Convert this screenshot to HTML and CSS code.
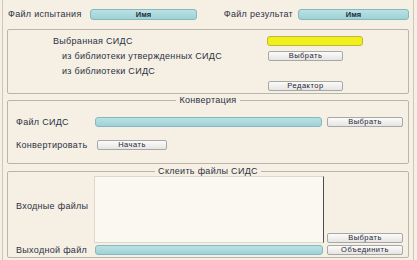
FILE: index.html
```html
<!DOCTYPE html>
<html lang="ru">
<head>
<meta charset="utf-8">
<link rel="stylesheet" href="styles.css">
</head>
<body>
<div class="page">
  <div class="top">
    <span class="lbl first">Файл испытания</span>
    <div class="field teal">Имя</div>
    <span class="lbl right">Файл результат</span>
    <div class="field teal">Имя</div>
  </div>

  <div class="box sel">
    <span class="lbl l1">Выбранная СИДС</span>
    <div class="field yellow"></div>
    <span class="lbl l2">из библиотеки утвержденных СИДС</span>
    <div class="btn">Выбрать</div>
    <span class="lbl l2">из библиотеки СИДС</span>
    <div></div>
    <div></div>
    <div class="btn">Редактор</div>
  </div>

  <fieldset class="group conv">
    <legend>Конвертация</legend>
    <div class="grid2">
      <span class="lbl">Файл СИДС</span>
      <div class="field teal"></div>
      <div class="btn">Выбрать</div>
      <span class="lbl">Конвертировать</span>
      <div class="btn start">Начать</div>
      <div></div>
    </div>
  </fieldset>

  <fieldset class="group merge">
    <legend>Склеить файлы СИДС</legend>
    <div class="grid3">
      <span class="lbl mid">Входные файлы</span>
      <div class="list"></div>
      <div class="btn pick">Выбрать</div>
      <span class="lbl">Выходной файл</span>
      <div class="field teal"></div>
      <div class="btn">Объединить</div>
    </div>
  </fieldset>
</div>
</body>
</html>
```

FILE: styles.css
```css
* { box-sizing: border-box; }
html, body { margin: 0; padding: 0; }
body {
  background: #f6efe3;
  font-family: "Liberation Sans", Arial, sans-serif;
  font-size: 9px;
  color: #2a3246;
  width: 417px;
  height: 260px;
  overflow: hidden;
}
.page {
  margin: 0 3px 0 2px;
  height: 260px;
  border-left: 1px solid #cdc7ba;
  border-right: 1px solid #cdc7ba;
  padding: 0 4px;
}
.lbl {
  letter-spacing: 0.3px;
  white-space: nowrap;
  line-height: 10px;
}
.top {
  display: grid;
  grid-template-columns: 83px 107px 1fr 111px;
  align-items: center;
  height: 29px;
  padding-bottom: 4px;
  padding-top: 3px;
}
.top .first { padding-left: 1px; }
.top .right { text-align: right; padding-right: 5px; }
.field {
  height: 10px;
  border-radius: 3px;
  font-size: 7.5px;
  font-weight: bold;
  line-height: 9px;
  text-align: center;
  color: #1f2a3a;
}
.top .field { height: 11px; line-height: 10px; }
.teal {
  background: linear-gradient(#b9e2e4, #9fd1d6);
  border: 1px solid #86b9bf;
}
.yellow {
  background: #f1ef1c;
  border: 1px solid #bdb935;
  width: 96px;
}
.btn {
  height: 10px;
  border: 1px solid #a7a7a7;
  border-radius: 2px;
  background: linear-gradient(#fbfbfa, #e6e5e3);
  font-size: 7.5px;
  line-height: 8px;
  text-align: center;
  letter-spacing: 0.5px;
  color: #1f2636;
  white-space: nowrap;
}
.box {
  border: 1px solid #bab5aa;
  border-radius: 2px;
  height: 65px;
  padding: 6px 0 2px;
  display: grid;
  grid-template-columns: 259px 1fr;
  grid-template-rows: repeat(4, 10px);
  row-gap: 5px;
  align-items: center;
}
.box .btn { width: 75px; margin-left: 1px; }
.box .l1 { padding-left: 45px; }
.box .l2 { padding-left: 54px; }
.group {
  margin: 1px 0 0;
  padding: 0;
  border: 1px solid #bab5aa;
  border-radius: 2px;
  min-width: 0;
}
.group legend {
  margin: 0 auto;
  padding: 0 3px;
  line-height: 10px;
  letter-spacing: 0.3px;
}
.conv { height: 69px; }
.grid2 {
  display: grid;
  grid-template-columns: 74px 227px 76px;
  column-gap: 5px;
  grid-template-rows: 10px 10px;
  row-gap: 13px;
  align-items: center;
  padding: 12px 0 0 8px;
}
.grid2 .start { width: 70px; margin-left: 2px; }
.merge { margin-top: 2px; height: 92px; }
.grid3 {
  display: grid;
  grid-template-columns: 75px 230px 76px;
  column-gap: 3px;
  grid-template-rows: 67px 10px;
  row-gap: 2px;
  align-items: center;
  padding: 0 0 0 8px;
}
.grid3 .mid { align-self: center; margin-top: -8px; }
.grid3 .teal { margin: 0 1px; }
.list {
  height: 67px;
  background: #fbf8f1;
  border: 1px solid #ddd8cc;
  border-right: 1px solid #4d4d4d;
}
.grid3 .pick { align-self: end; margin-bottom: 0; }
```
